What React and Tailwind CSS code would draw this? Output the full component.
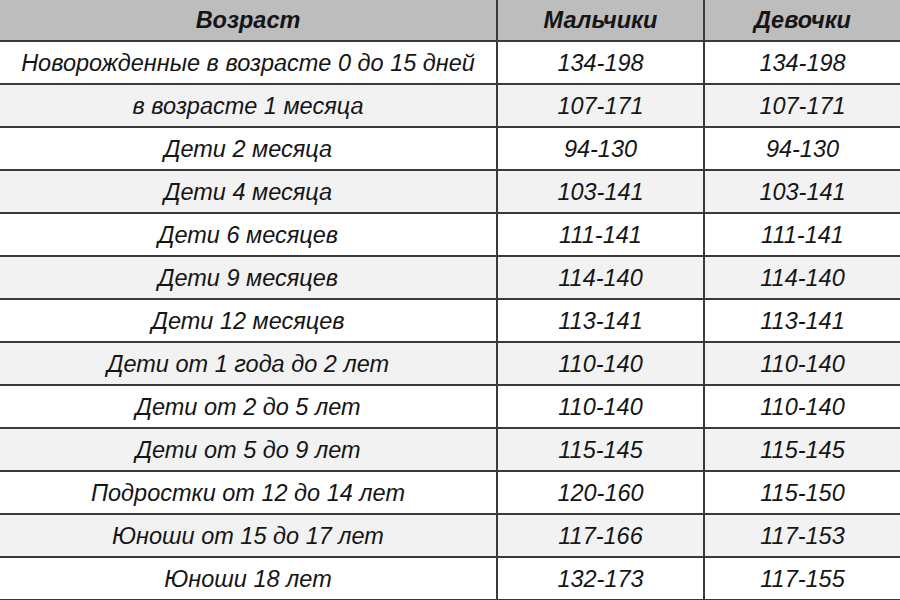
import React from 'react';

const rows = [
  ['Новорожденные в возрасте 0 до 15 дней', '134-198', '134-198'],
  ['в возрасте 1 месяца', '107-171', '107-171'],
  ['Дети 2 месяца', '94-130', '94-130'],
  ['Дети 4 месяца', '103-141', '103-141'],
  ['Дети 6 месяцев', '111-141', '111-141'],
  ['Дети 9 месяцев', '114-140', '114-140'],
  ['Дети 12 месяцев', '113-141', '113-141'],
  ['Дети от 1 года до 2 лет', '110-140', '110-140'],
  ['Дети от 2 до 5 лет', '110-140', '110-140'],
  ['Дети от 5 до 9 лет', '115-145', '115-145'],
  ['Подростки от 12 до 14 лет', '120-160', '115-150'],
  ['Юноши от 15 до 17 лет', '117-166', '117-153'],
  ['Юноши 18 лет', '132-173', '117-155'],
];

const Cell = ({ children, first, className = '' }) => (
  <div
    className={`flex items-center justify-center pt-[2px] border-b-2 border-[#3a3a3a] ${first ? '' : 'border-l-2'} ${className}`}
  >
    {children}
  </div>
);

export default function App() {
  return (
    <div className="w-[900px] h-[600px] overflow-hidden bg-white font-['Liberation_Sans',Arial,sans-serif] italic text-[23.5px] text-[#151515]">
      <div className="grid grid-cols-[496px_207px_1fr]">
        <Cell first className="h-[42px] bg-[#bdbdbd] font-bold">Возраст</Cell>
        <Cell className="h-[42px] bg-[#bdbdbd] font-bold">Мальчики</Cell>
        <Cell className="h-[42px] bg-[#bdbdbd] font-bold">Девочки</Cell>
        {rows.map((r, i) => {
          const bg = i % 2 === 0 ? 'bg-white' : 'bg-[#f2f2f2]';
          return (
            <React.Fragment key={i}>
              <Cell first className={`h-[43px] ${bg}`}>{r[0]}</Cell>
              <Cell className={`h-[43px] ${bg}`}>{r[1]}</Cell>
              <Cell className={`h-[43px] ${bg}`}>{r[2]}</Cell>
            </React.Fragment>
          );
        })}
      </div>
    </div>
  );
}
